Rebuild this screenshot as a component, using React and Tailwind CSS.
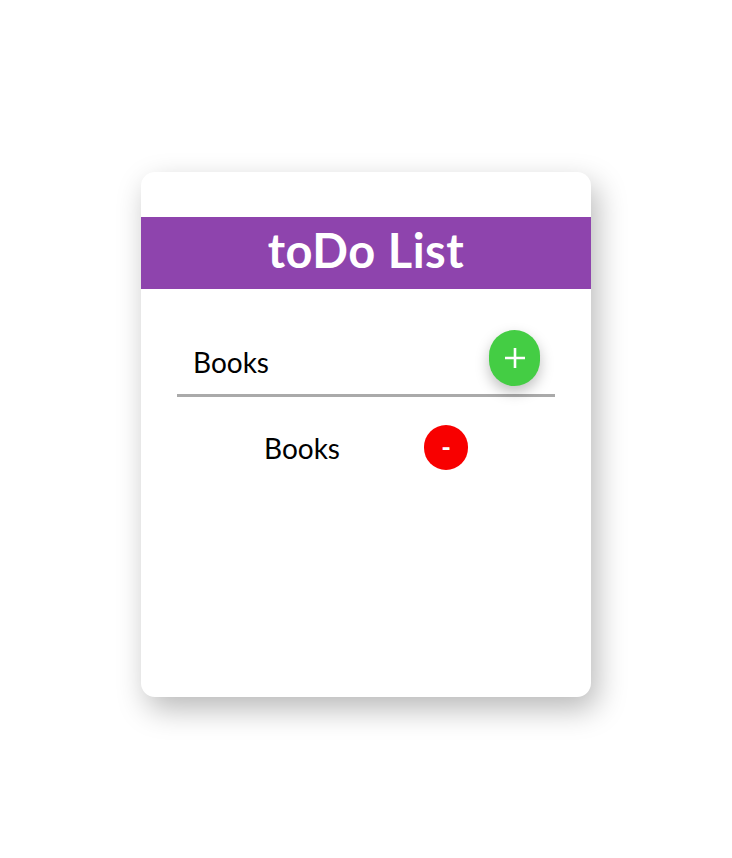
import React, { useState } from 'react';

const App = () => {
    const [text, setText] = useState('Books');
    const [items, setItems] = useState(['Books']);

    const addItem = () => {
        if (!text.trim()) return;
        setItems((prev) => [...prev, text.trim()]);
    };

    const removeItem = (index) => {
        setItems((prev) => prev.filter((_, i) => i !== index));
    };

    return (
        <div
            className="min-h-screen w-full bg-white flex justify-center pt-[172px]"
            style={{ fontFamily: 'Lato, "Noto Sans", sans-serif' }}
        >
            <div className="w-[450px] h-[525px] bg-white rounded-[14px] shadow-[6px_12px_30px_rgba(0,0,0,0.28)] pt-[45px]">
                <h1 className="h-[72px] bg-[#8e44ad] text-white text-[47px] font-bold flex items-center justify-center pb-[6px] tracking-[0.5px]">
                    toDo List
                </h1>

                <div className="mx-[36px] mt-[40px] relative border-b-[3px] border-[#aaaaaa] h-[68px] flex items-center">
                    <input
                        type="text"
                        value={text}
                        onChange={(e) => setText(e.target.value)}
                        className="flex-1 h-full pl-[16px] pt-[0px] text-[28px] text-black bg-transparent outline-none"
                        style={{ fontFamily: 'Lato, "Noto Sans", sans-serif' }}
                    />
                    <button
                        onClick={addItem}
                        className="absolute right-[15px] top-[1px] w-[51px] h-[56px] rounded-full bg-[#44cd44] text-white flex items-center justify-center shadow-[0_6px_14px_rgba(0,0,0,0.25)]"
                    >
                        <svg width="22" height="22" viewBox="0 0 22 22" fill="none">
                            <path d="M11 1v20M1 11h20" stroke="white" strokeWidth="2.6" />
                        </svg>
                    </button>
                </div>

                <ul className="mt-[28px] flex flex-col gap-3">
                    {items.map((item, i) => (
                        <li key={i} className="flex items-center justify-center gap-[84px] h-[45px]">
                            <span className="text-[28px] text-black">{item}</span>
                            <button
                                onClick={() => removeItem(i)}
                                className="w-[44px] h-[45px] rounded-full bg-[#f80000] text-white text-[26px] font-bold flex items-center justify-center"
                            >
                                -
                            </button>
                        </li>
                    ))}
                </ul>
            </div>
        </div>
    );
};

export default App;
